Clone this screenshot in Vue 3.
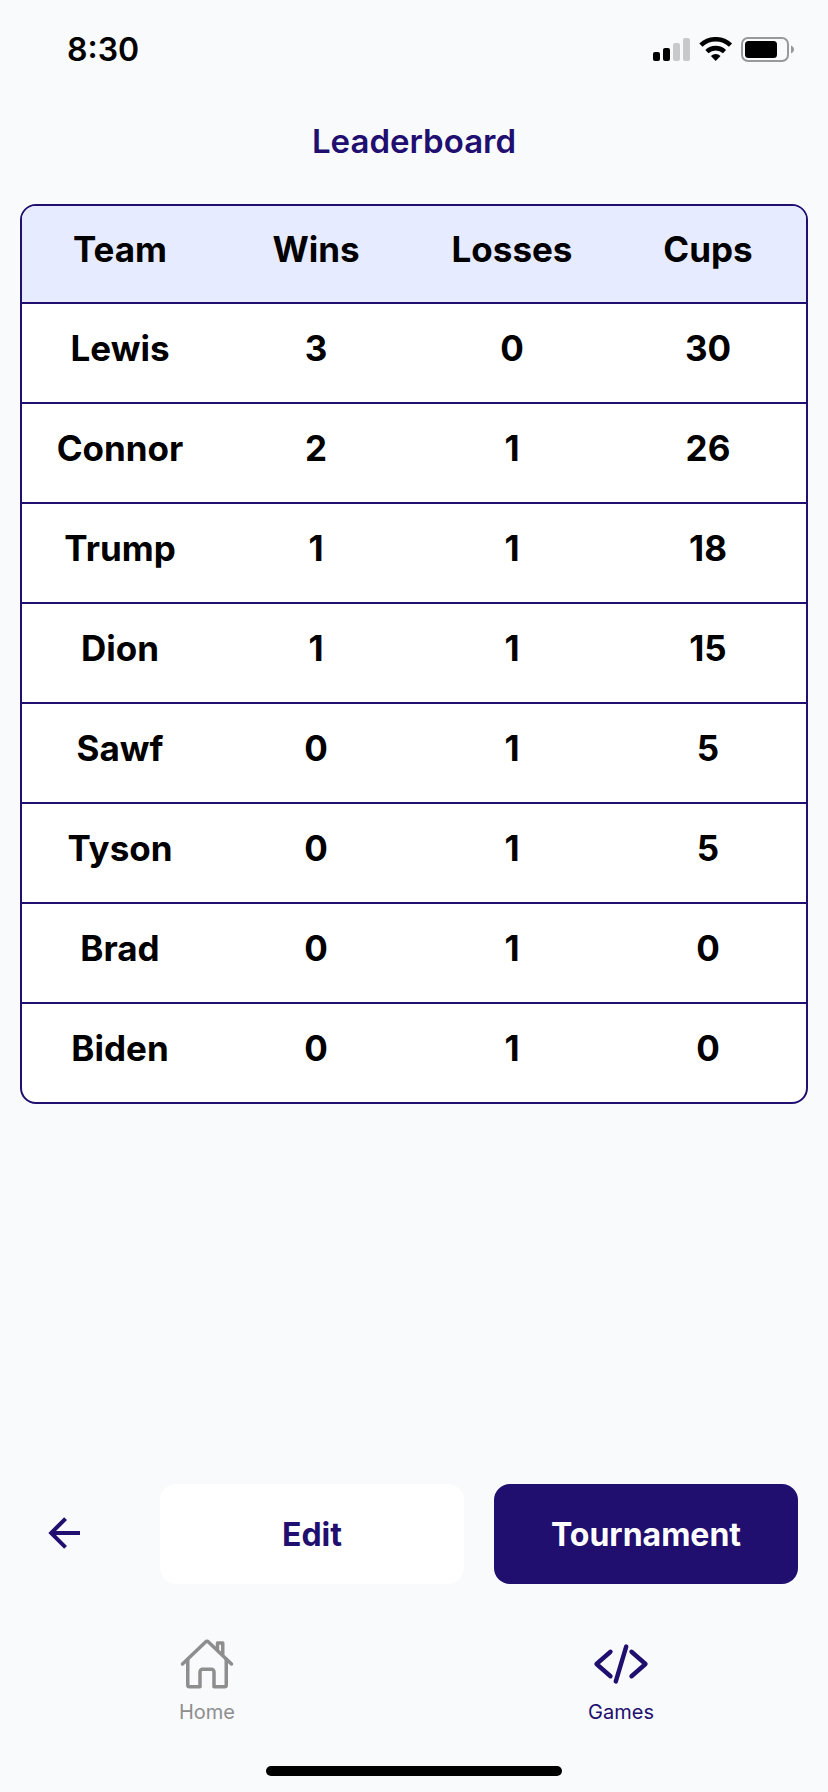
<script setup>
const columns = ['Team', 'Wins', 'Losses', 'Cups']

const teams = [
  { name: 'Lewis', wins: 3, losses: 0, cups: 30 },
  { name: 'Connor', wins: 2, losses: 1, cups: 26 },
  { name: 'Trump', wins: 1, losses: 1, cups: 18 },
  { name: 'Dion', wins: 1, losses: 1, cups: 15 },
  { name: 'Sawf', wins: 0, losses: 1, cups: 5 },
  { name: 'Tyson', wins: 0, losses: 1, cups: 5 },
  { name: 'Brad', wins: 0, losses: 1, cups: 0 },
  { name: 'Biden', wins: 0, losses: 1, cups: 0 },
]
</script>

<template>
  <div class="screen">
    <header class="status">
      <time class="clock">8:30</time>
      <svg class="status-icons" width="142" height="26" viewBox="0 0 142 26" aria-hidden="true">
        <!-- signal -->
        <rect x="0" y="15" width="7" height="9" rx="2" />
        <rect x="10" y="11" width="7" height="13" rx="2" />
        <rect x="20" y="6" width="7" height="18" rx="2" fill="#c8c9cb" />
        <rect x="30" y="1" width="7" height="23" rx="2" fill="#c8c9cb" />
        <!-- wifi -->
        <g transform="translate(46 -1)">
          <path d="M1.9 9.1A21.7 21.7 0 0 1 31.5 9.1" fill="none" stroke="#000" stroke-width="4.6" />
          <path d="M7.9 15.6A12.9 12.9 0 0 1 25.5 15.6" fill="none" stroke="#000" stroke-width="4.6" />
          <path d="M16.7 25L11.9 19.9A7 7 0 0 1 21.5 19.9Z" />
        </g>
        <!-- battery -->
        <rect x="89" y="1" width="46" height="23" rx="6" fill="none" stroke="#98999b" stroke-width="2" />
        <rect x="92" y="4" width="32" height="17" rx="3.5" />
        <path d="M138 8.5C142 10 142 15 138 16.5Z" fill="#98999b" />
      </svg>
    </header>

    <main class="content">
      <h1 class="title">Leaderboard</h1>
      <table class="board">
        <thead>
          <tr>
            <th v-for="column in columns" :key="column" scope="col">{{ column }}</th>
          </tr>
        </thead>
        <tbody>
          <tr v-for="team in teams" :key="team.name">
            <th scope="row">{{ team.name }}</th>
            <td>{{ team.wins }}</td>
            <td>{{ team.losses }}</td>
            <td>{{ team.cups }}</td>
          </tr>
        </tbody>
      </table>
    </main>

    <div class="actions">
      <button class="back" type="button" aria-label="Back">
        <svg width="48" height="48" viewBox="0 0 24 24" fill="currentColor" aria-hidden="true">
          <path d="M20 11v2H8l5.5 5.5-1.42 1.42L4.16 12l7.92-7.92L13.5 5.5 8 11h12z" />
        </svg>
      </button>
      <button class="action" type="button">Edit</button>
      <button class="action primary" type="button">Tournament</button>
    </div>

    <nav class="tabs">
      <a class="tab" href="#home">
        <svg class="tab-icon" viewBox="0 0 512 512" aria-hidden="true">
          <path d="M80 212v236a16 16 0 0 0 16 16h96V328a24 24 0 0 1 24-24h80a24 24 0 0 1 24 24v136h96a16 16 0 0 0 16-16V212" />
          <path d="M480 256L266.89 52c-5-5.28-16.69-5.34-21.78 0L32 256M400 179V64h-48v69" />
        </svg>
        <span>Home</span>
      </a>
      <a class="tab active" href="#games" aria-current="page">
        <svg class="tab-icon" viewBox="0 0 512 512" aria-hidden="true">
          <path d="M160 368L32 256l128-112M352 368l128-112-128-112M304 96l-96 320" />
        </svg>
        <span>Games</span>
      </a>
    </nav>
    <div class="home-indicator"></div>
  </div>
</template>

<style>
body {
  margin: 0;
  background: #f9fafc;
}
</style>

<style scoped>
.screen {
  --navy: #210f70;
  box-sizing: border-box;
  display: flex;
  flex-direction: column;
  min-height: 100vh;
  padding-bottom: 16px;
  background: #f9fafc;
  color: #000;
  font-family: Inter, "Liberation Sans", sans-serif;
}

.status {
  display: flex;
  align-items: center;
  justify-content: space-between;
  padding: 30px 33px 0 67px;
}

.clock {
  font-size: 32px;
  font-weight: 600;
  line-height: 40px;
}

.content {
  padding: 50px 20px 32px;
}

.title {
  margin: 0 0 42px;
  color: var(--navy);
  font-size: 33px;
  font-weight: 600;
  line-height: 42px;
  text-align: center;
}

.board {
  width: 100%;
  table-layout: fixed;
  border: 2px solid var(--navy);
  border-radius: 16px;
  border-spacing: 0;
  overflow: hidden;
  background: #fff;
  font-size: 35px;
  line-height: 44px;
  text-align: center;
}

.board th,
.board td {
  box-sizing: border-box;
  height: 100px;
  padding: 0 0 10px;
  border-bottom: 2px solid var(--navy);
  font-weight: 700;
  vertical-align: middle;
}

.board thead th {
  height: 98px;
  background: #e6ebff;
}

.board tbody tr:last-child > * {
  height: 98px;
  border-bottom: 0;
}

.actions {
  display: flex;
  gap: 30px;
  margin-top: auto;
  padding: 0 30px;
}

.back {
  display: flex;
  align-items: center;
  width: 100px;
  padding: 0 10px 2px;
  border: 0;
  background: none;
  color: var(--navy);
}

.action {
  flex: 1;
  height: 100px;
  padding: 0;
  border: 0;
  border-radius: 16px;
  background: #fff;
  color: var(--navy);
  font-family: inherit;
  font-size: 32px;
  font-weight: 700;
}

.primary {
  background: var(--navy);
  color: #fff;
}

.tabs {
  display: flex;
  padding: 52px 0 42px;
}

.tab {
  display: flex;
  flex: 1;
  flex-direction: column;
  align-items: center;
  gap: 8px;
  color: #8e8e8f;
  font-size: 20px;
  line-height: 24px;
  text-decoration: none;
}

.tab.active {
  color: var(--navy);
}

.tab-icon {
  width: 56px;
  height: 56px;
  fill: none;
  stroke: currentColor;
  stroke-width: 32;
  stroke-linecap: round;
  stroke-linejoin: round;
}

.active .tab-icon {
  stroke-width: 40;
}

.home-indicator {
  align-self: center;
  width: 296px;
  height: 10px;
  border-radius: 5px;
  background: #000;
}
</style>
